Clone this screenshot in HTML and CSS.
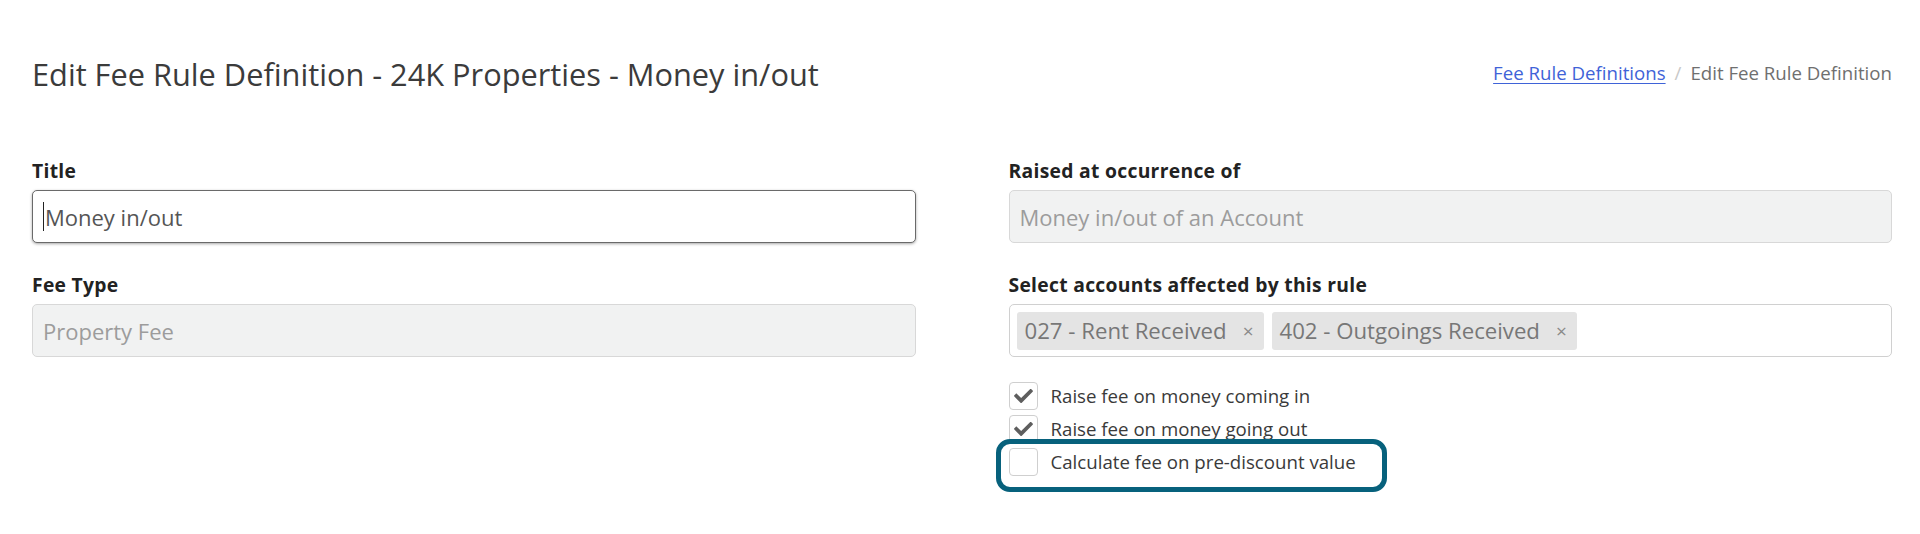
FILE: index.html
```html
<!DOCTYPE html>
<html lang="en">
<head>
<meta charset="utf-8">
<title>Edit Fee Rule Definition</title>
<link rel="stylesheet" href="styles.css">
</head>
<body>
<div class="page">
  <header class="page-head">
    <h1 class="page-title">Edit Fee Rule Definition - 24K Properties - Money in/out</h1>
    <nav class="crumbs">
      <a class="crumb-link" href="#">Fee Rule Definitions</a>
      <span class="crumb-sep">/</span>
      <span class="crumb-current">Edit Fee Rule Definition</span>
    </nav>
  </header>

  <form class="form-grid">
    <div class="col">
      <div class="field">
        <label class="field-label">Title</label>
        <div class="input input-focus"><span class="caret"></span>Money in/out</div>
      </div>
      <div class="field">
        <label class="field-label">Fee Type</label>
        <div class="input input-disabled">Property Fee</div>
      </div>
    </div>

    <div class="col">
      <div class="field">
        <label class="field-label">Raised at occurrence of</label>
        <div class="input input-disabled">Money in/out of an Account</div>
      </div>
      <div class="field">
        <label class="field-label">Select accounts affected by this rule</label>
        <div class="select-multi">
          <span class="tag"><span class="tag-text">027 - Rent Received</span><span class="tag-x">×</span></span>
          <span class="tag"><span class="tag-text">402 - Outgoings Received</span><span class="tag-x">×</span></span>
        </div>
      </div>
      <div class="checks">
        <div class="check-row">
          <span class="checkbox"><svg class="tick" viewBox="0 0 512 380" aria-hidden="true"><path d="M173.9 371.4L7.5 205c-10-10-10-26.2 0-36.2l36.2-36.2c10-10 26.2-10 36.2 0L192 244.7 432.1 4.6c10-10 26.2-10 36.2 0l36.2 36.2c10 10 10 26.2 0 36.2L210.1 371.4c-10 10-26.2 10-36.2 0z"/></svg></span>
          <span class="check-text">Raise fee on money coming in</span>
        </div>
        <div class="check-row">
          <span class="checkbox"><svg class="tick" viewBox="0 0 512 380" aria-hidden="true"><path d="M173.9 371.4L7.5 205c-10-10-10-26.2 0-36.2l36.2-36.2c10-10 26.2-10 36.2 0L192 244.7 432.1 4.6c10-10 26.2-10 36.2 0l36.2 36.2c10 10 10 26.2 0 36.2L210.1 371.4c-10 10-26.2 10-36.2 0z"/></svg></span>
          <span class="check-text">Raise fee on money going out</span>
        </div>
        <div class="check-row check-row-marked">
          <span class="checkbox"></span>
          <span class="check-text">Calculate fee on pre-discount value</span>
        </div>
      </div>
    </div>
  </form>
</div>
</body>
</html>
```

FILE: styles.css
```css
* { box-sizing: border-box; }

html, body {
  margin: 0;
  padding: 0;
  background: #ffffff;
}

body {
  font-family: "Open Sans", "Noto Sans", "Liberation Sans", sans-serif;
  color: #333333;
  min-height: 534px;
}

.page {
  padding: 56px 28px 40px 32px;
}

.page-head {
  display: flex;
  align-items: center;
  justify-content: space-between;
  height: 37px;
}

.page-title {
  margin: 0;
  font-size: 30.76px;
  font-weight: 400;
  line-height: 37px;
  color: #3b3b3b;
}

.crumbs {
  display: flex;
  align-items: center;
  font-size: 18.67px;
  line-height: 28px;
  margin-top: -3px;
}

.crumb-link {
  color: #3f63d8;
  text-decoration: underline;
  text-underline-offset: 3px;
}

.crumb-sep {
  color: #c8c8c8;
  margin: 0 9px;
}

.crumb-current {
  color: #6f6f6f;
}

.form-grid {
  display: grid;
  grid-template-columns: 1fr 1fr;
  column-gap: 93px;
  margin: 64px 0 0 0;
}

.col {
  display: flex;
  flex-direction: column;
}

.field + .field {
  margin-top: 28px;
}

.field-label {
  display: block;
  font-size: 19.3px;
  letter-spacing: 0.3px;
  font-weight: 700;
  line-height: 28px;
  color: #222222;
  margin-bottom: 5px;
}

.input {
  display: flex;
  align-items: center;
  height: 53px;
  padding: 0 10px;
  border: 1px solid #d0d0d0;
  border-radius: 5px;
  font-size: 22px;
  line-height: 30px;
  color: #555555;
  background: #ffffff;
}

.input-focus {
  border-color: #6a6a6a;
  box-shadow: 0 1px 3px rgba(0, 0, 0, 0.35);
}

.caret {
  display: inline-block;
  width: 1px;
  height: 29px;
  background: #222222;
  margin-right: 1px;
}

.input-disabled {
  background: #f1f2f2;
  border-color: #d8d8d8;
  color: #9c9c9c;
}

.select-multi {
  display: flex;
  align-items: center;
  gap: 8px;
  height: 53px;
  padding: 0 7px;
  border: 1px solid #d0d0d0;
  border-radius: 5px;
  background: #ffffff;
}

.tag {
  display: inline-flex;
  align-items: center;
  height: 38px;
  padding: 0 10px 0 8px;
  background: #e4e4e4;
  border-radius: 3px;
}

.tag-text {
  font-size: 22.2px;
  line-height: 38px;
  color: #777777;
}

.tag-x {
  margin-left: 16px;
  font-size: 19px;
  line-height: 38px;
  color: #8a8a8a;
}

.checks {
  margin-top: 22px;
  display: flex;
  flex-direction: column;
}

.check-row {
  display: flex;
  align-items: center;
  height: 33px;
}

.check-row-marked {
  position: relative;
  width: 391px;
  height: 53px;
  margin: -6px 0 0 -13px;
  padding: 0 0 7px 8px;
  border: 5px solid #07617c;
  border-radius: 14px;
}

.checkbox {
  display: inline-flex;
  align-items: center;
  justify-content: center;
  width: 29px;
  height: 28px;
  border: 1px solid #cfcfcf;
  border-radius: 4px;
  background: #ffffff;
  flex: none;
}

.tick {
  width: 19px;
  height: 14px;
  fill: #5e5e5e;
}

.check-text {
  margin-left: 13px;
  font-size: 18.67px;
  line-height: 28px;
  color: #3a3a3a;
}
```
